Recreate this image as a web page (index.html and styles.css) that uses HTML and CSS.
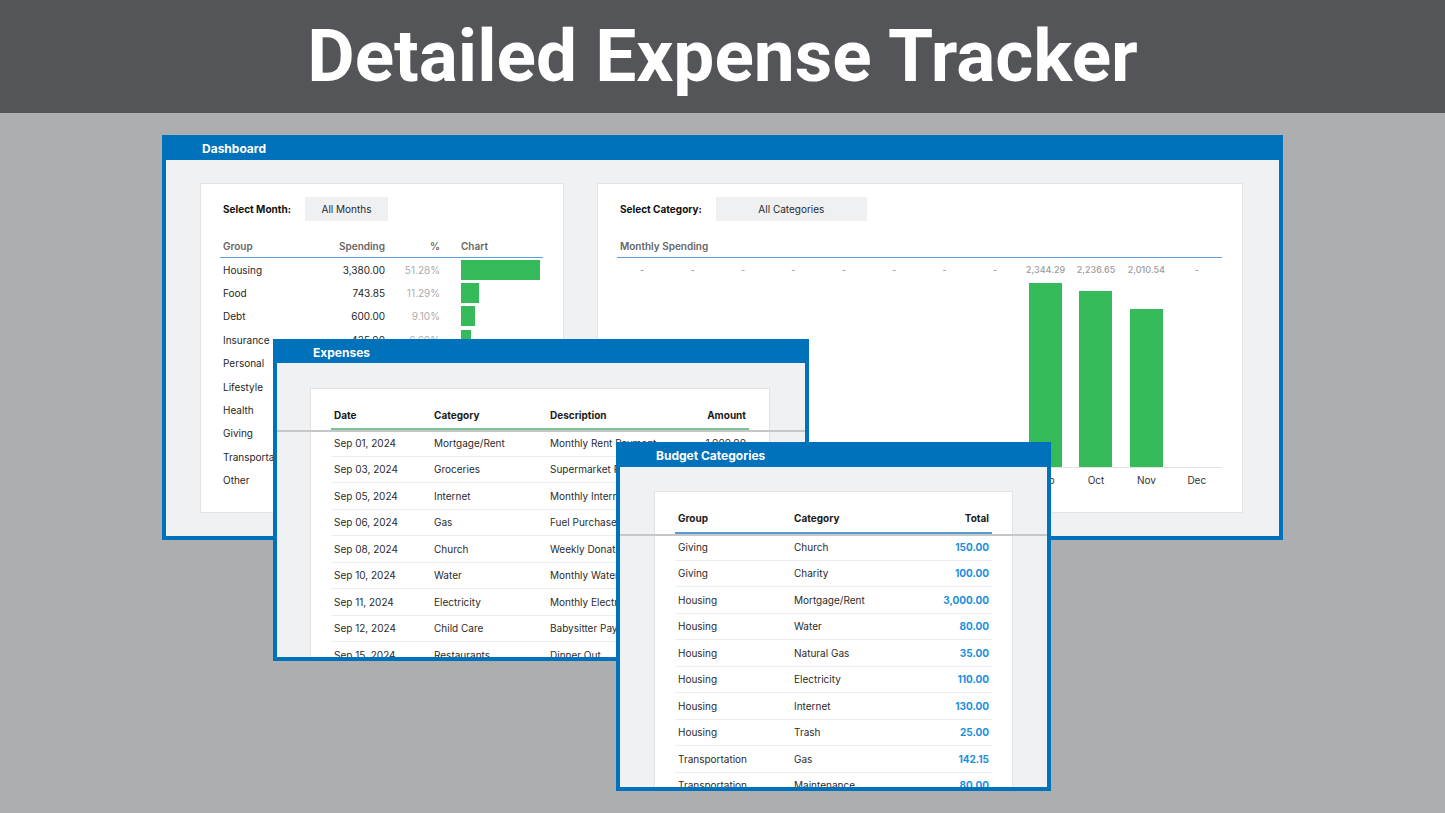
FILE: index.html
```html
<!DOCTYPE html>
<html lang="en">
<head>
<meta charset="utf-8">
<title>Detailed Expense Tracker</title>
<link rel="stylesheet" href="styles.css">
</head>
<body>
<header class="banner"><h1>Detailed Expense Tracker</h1></header>
<main class="desk">
  <section class="win win-dash">
    <div class="win-title">Dashboard</div>
    <div class="win-body dash-body">
      <div class="card card-month">
        <div class="selector"><span class="sel-label">Select Month:</span><span class="sel-btn btn-month">All Months</span></div>
        <div class="gtable">
          <div class="grow ghead"><span>Group</span><span class="r">Spending</span><span class="r">%</span><span class="chartcol">Chart</span></div>
          <div class="grow"><span>Housing</span><span class="r">3,380.00</span><span class="r pct">51.28%</span><span class="chartcol"><i class="hbar" style="width:80px"></i></span></div>
          <div class="grow"><span>Food</span><span class="r">743.85</span><span class="r pct">11.29%</span><span class="chartcol"><i class="hbar" style="width:18px"></i></span></div>
          <div class="grow"><span>Debt</span><span class="r">600.00</span><span class="r pct">9.10%</span><span class="chartcol"><i class="hbar" style="width:14px"></i></span></div>
          <div class="grow"><span>Insurance</span><span class="r">435.00</span><span class="r pct">6.60%</span><span class="chartcol"><i class="hbar" style="width:10px"></i></span></div>
          <div class="grow"><span>Personal</span><span class="r">380.00</span><span class="r pct">5.77%</span><span class="chartcol"><i class="hbar" style="width:9px"></i></span></div>
          <div class="grow"><span>Lifestyle</span><span class="r">320.00</span><span class="r pct">4.86%</span><span class="chartcol"><i class="hbar" style="width:8px"></i></span></div>
          <div class="grow"><span>Health</span><span class="r">260.00</span><span class="r pct">3.94%</span><span class="chartcol"><i class="hbar" style="width:6px"></i></span></div>
          <div class="grow"><span>Giving</span><span class="r">250.00</span><span class="r pct">3.79%</span><span class="chartcol"><i class="hbar" style="width:6px"></i></span></div>
          <div class="grow"><span>Transportation</span><span class="r">142.15</span><span class="r pct">2.16%</span><span class="chartcol"><i class="hbar" style="width:3px"></i></span></div>
          <div class="grow"><span>Other</span><span class="r">80.00</span><span class="r pct">1.21%</span><span class="chartcol"><i class="hbar" style="width:2px"></i></span></div>
        </div>
      </div>
      <div class="card card-cat">
        <div class="selector"><span class="sel-label">Select Category:</span><span class="sel-btn btn-cat">All Categories</span></div>
        <div class="ghead chart-head">Monthly Spending</div>
        <div class="chart">
          <div class="col"><span class="val">-</span><span class="zone"></span><span class="mon">Jan</span></div>
          <div class="col"><span class="val">-</span><span class="zone"></span><span class="mon">Feb</span></div>
          <div class="col"><span class="val">-</span><span class="zone"></span><span class="mon">Mar</span></div>
          <div class="col"><span class="val">-</span><span class="zone"></span><span class="mon">Apr</span></div>
          <div class="col"><span class="val">-</span><span class="zone"></span><span class="mon">May</span></div>
          <div class="col"><span class="val">-</span><span class="zone"></span><span class="mon">Jun</span></div>
          <div class="col"><span class="val">-</span><span class="zone"></span><span class="mon">Jul</span></div>
          <div class="col"><span class="val">-</span><span class="zone"></span><span class="mon">Aug</span></div>
          <div class="col"><span class="val">2,344.29</span><span class="zone"><i class="vbar" style="height:184px"></i></span><span class="mon">Sep</span></div>
          <div class="col"><span class="val">2,236.65</span><span class="zone"><i class="vbar" style="height:176px"></i></span><span class="mon">Oct</span></div>
          <div class="col"><span class="val">2,010.54</span><span class="zone"><i class="vbar" style="height:158px"></i></span><span class="mon">Nov</span></div>
          <div class="col"><span class="val">-</span><span class="zone"></span><span class="mon">Dec</span></div>
        </div>
      </div>
    </div>
  </section>

  <section class="win win-exp">
    <div class="win-title title-exp">Expenses</div>
    <div class="win-body exp-body">
      <div class="card tcard exp-card">
        <div class="thead erow"><span>Date</span><span>Category</span><span>Description</span><span class="r">Amount</span></div>
        <div class="trow erow"><span>Sep 01, 2024</span><span>Mortgage/Rent</span><span>Monthly Rent Payment</span><span class="r">1,000.00</span></div>
        <div class="trow erow"><span>Sep 03, 2024</span><span>Groceries</span><span>Supermarket Purchase</span><span class="r">152.30</span></div>
        <div class="trow erow"><span>Sep 05, 2024</span><span>Internet</span><span>Monthly Internet Bill</span><span class="r">130.00</span></div>
        <div class="trow erow"><span>Sep 06, 2024</span><span>Gas</span><span>Fuel Purchase</span><span class="r">45.00</span></div>
        <div class="trow erow"><span>Sep 08, 2024</span><span>Church</span><span>Weekly Donation</span><span class="r">50.00</span></div>
        <div class="trow erow"><span>Sep 10, 2024</span><span>Water</span><span>Monthly Water Bill</span><span class="r">80.00</span></div>
        <div class="trow erow"><span>Sep 11, 2024</span><span>Electricity</span><span>Monthly Electricity Bill</span><span class="r">110.00</span></div>
        <div class="trow erow"><span>Sep 12, 2024</span><span>Child Care</span><span>Babysitter Payment</span><span class="r">60.00</span></div>
        <div class="trow erow"><span>Sep 15, 2024</span><span>Restaurants</span><span>Dinner Out</span><span class="r">48.50</span></div>
      </div>
      <div class="freeze freeze-exp"></div>
    </div>
  </section>

  <section class="win win-bud">
    <div class="win-title">Budget Categories</div>
    <div class="win-body bud-body">
      <div class="card tcard bud-card">
        <div class="thead brow"><span>Group</span><span>Category</span><span class="r">Total</span></div>
        <div class="trow brow"><span>Giving</span><span>Church</span><span class="r tot">150.00</span></div>
        <div class="trow brow"><span>Giving</span><span>Charity</span><span class="r tot">100.00</span></div>
        <div class="trow brow"><span>Housing</span><span>Mortgage/Rent</span><span class="r tot">3,000.00</span></div>
        <div class="trow brow"><span>Housing</span><span>Water</span><span class="r tot">80.00</span></div>
        <div class="trow brow"><span>Housing</span><span>Natural Gas</span><span class="r tot">35.00</span></div>
        <div class="trow brow"><span>Housing</span><span>Electricity</span><span class="r tot">110.00</span></div>
        <div class="trow brow"><span>Housing</span><span>Internet</span><span class="r tot">130.00</span></div>
        <div class="trow brow"><span>Housing</span><span>Trash</span><span class="r tot">25.00</span></div>
        <div class="trow brow"><span>Transportation</span><span>Gas</span><span class="r tot">142.15</span></div>
        <div class="trow brow"><span>Transportation</span><span>Maintenance</span><span class="r tot">80.00</span></div>
      </div>
      <div class="freeze freeze-bud"></div>
    </div>
  </section>
</main>
</body>
</html>
```

FILE: styles.css
```css
* { box-sizing: border-box; }
html, body { margin: 0; padding: 0; }
body {
  width: 1445px;
  height: 813px;
  overflow: hidden;
  background: #adaeb0;
  font-family: Inter, "Noto Sans", sans-serif;
  color: #2b2b2b;
}

.banner {
  height: 113px;
  background: #545558;
  display: flex;
  align-items: center;
  justify-content: center;
}
.banner h1 {
  margin: 0;
  font-family: Roboto, "Liberation Sans", sans-serif;
  font-weight: 700;
  font-size: 73px;
  line-height: 1;
  color: #ffffff;
}

.desk { position: relative; height: 700px; }

.win {
  position: absolute;
  background: #0071bb;
  padding: 0 4px 4px 4px;
  display: flex;
  flex-direction: column;
}
.win-title {
  height: 25px;
  flex: none;
  display: flex;
  align-items: center;
  padding: 2px 0 0 36px;
  color: #ffffff;
  font-weight: 700;
  font-size: 12px;
}
.title-exp { height: 24px; }
.win-body {
  flex: 1;
  background: #f0f1f3;
  overflow: hidden;
  position: relative;
}
.win-dash { left: 162px; top: 22px; width: 1121px; height: 405px; }
.win-exp { left: 273px; top: 226px; width: 536px; height: 322px; }
.win-bud { left: 616px; top: 329px; width: 435px; height: 349px; }

.card {
  background: #ffffff;
  border: 1px solid #e2e3e5;
}

/* Dashboard */
.dash-body {
  display: flex;
  gap: 33px;
  padding: 23px 36px 23px 34px;
}
.card-month { width: 364px; flex: none; padding: 13px 20px 0 19px; }
.card-cat { flex: 1; padding: 13px 20px 0 19px; }

.selector {
  display: flex;
  align-items: center;
  height: 24px;
  padding-left: 3px;
}
.sel-label {
  font-weight: 700;
  font-size: 10px;
  color: #111111;
  margin-right: 14px;
}
.sel-btn {
  height: 24px;
  background: #eff0f2;
  display: flex;
  align-items: center;
  justify-content: center;
  font-size: 10px;
  color: #2a2a2a;
}
.btn-month { width: 83px; }
.btn-cat { width: 151px; }

.grow {
  display: grid;
  grid-template-columns: 88px 80px 55px 1fr;
  align-items: center;
  height: 23.4px;
  font-size: 10px;
  color: #262626;
}
.grow > span { padding: 0 3px; white-space: nowrap; overflow: hidden; }
.ghead {
  height: 23px;
  margin-top: 14px;
  border-bottom: 1px solid #5d9fdc;
  font-weight: 600;
  font-size: 10px;
  color: #666666;
}
.r { text-align: right; }
.pct { color: #ababab; }
.grow > .chartcol { padding-left: 18px; display: flex; align-items: center; }
.hbar { display: block; height: 20px; background: #35ba59; }

.chart-head { display: flex; align-items: center; padding-left: 3px; }
.chart {
  display: grid;
  grid-template-columns: repeat(12, 1fr);
}
.col { display: flex; flex-direction: column; }
.val {
  height: 23px;
  line-height: 23px;
  text-align: center;
  font-size: 9px;
  font-weight: 500;
  color: #9c9c9c;
}
.zone {
  height: 187px;
  display: flex;
  align-items: flex-end;
  justify-content: center;
  border-bottom: 1px solid #e2e2e2;
}
.vbar { display: block; width: 33px; background: #35ba59; }
.mon {
  height: 24px;
  line-height: 24px;
  text-align: center;
  font-size: 10px;
  color: #333333;
}

/* Table windows */
.exp-body { padding: 25px 35px 0 33px; }
.bud-body { padding: 24px 34px 0 34px; }
.tcard { height: 420px; padding: 12px 20px 0 20px; }

.erow { grid-template-columns: 100px 116px 1fr 80px; }
.brow { grid-template-columns: 116px 1fr 100px; }
.thead, .trow {
  display: grid;
  align-items: center;
  font-size: 10px;
}
.thead > span, .trow > span { padding: 0 3px; white-space: nowrap; overflow: hidden; }
.thead {
  height: 29px;
  font-weight: 700;
  color: #1b1b1b;
}
.bud-card .thead { height: 30px; }
.exp-card .thead { border-bottom: 2px solid #7cc48f; }
.bud-card .thead { border-bottom: 2px solid #5b9bd5; }
.trow {
  height: 26.5px;
  border-bottom: 1px solid #ededed;
  color: #2b2b2b;
}
.tot { color: #1c8fdc; font-weight: 700; }

.freeze {
  position: absolute;
  left: 0;
  right: 0;
  height: 2px;
  background: #c6c7c9;
}
.freeze-exp { top: 67px; }
.freeze-bud { top: 67px; }
```
